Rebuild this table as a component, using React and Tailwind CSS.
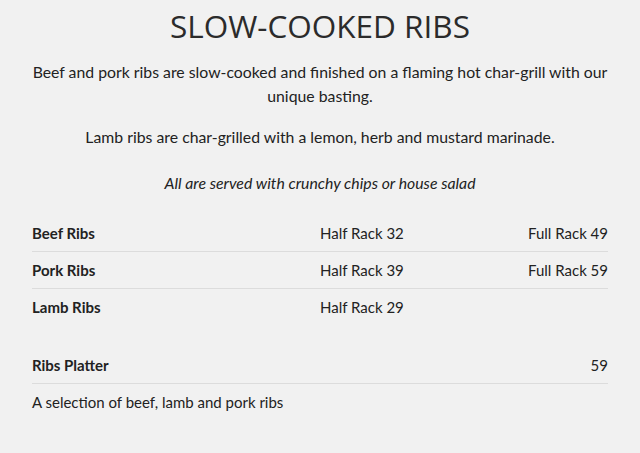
import React from 'react';

const ribs = [
  { name: 'Beef Ribs', half: 'Half Rack 32', full: 'Full Rack 49' },
  { name: 'Pork Ribs', half: 'Half Rack 39', full: 'Full Rack 59' },
  { name: 'Lamb Ribs', half: 'Half Rack 29', full: '' },
];

export default function App() {
  return (
    <div className="min-h-screen bg-[#f1f1f1] px-[32px] text-[#222] font-['Lato','Open_Sans',sans-serif] overflow-hidden">
      <h1 className="pt-[6px] text-center text-[31.5px] leading-[40px] font-normal text-[#2b2b2b] font-['Open_Sans','Lato',sans-serif]">
        SLOW-COOKED RIBS
      </h1>

      {/* intro */}
      <div className="-mx-[4px] mt-[14px] text-center text-[15.8px] leading-[24px]">
        <p>Beef and pork ribs are slow-cooked and finished on a flaming hot char-grill with our unique basting.</p>
        <p className="mt-[17px]">Lamb ribs are char-grilled with a lemon, herb and mustard marinade.</p>
        <p className="mt-[22px] italic">All are served with crunchy chips or house salad</p>
      </div>

      {/* rib racks */}
      <div className="mt-[20px] text-[15px] leading-[20px]">
        {ribs.map((r, i) => (
          <div
            key={r.name}
            className={`grid grid-cols-2 py-2 ${i < ribs.length - 1 ? 'border-b border-[#dcdcdc]' : 'border-b border-transparent'}`}
          >
            <span className="font-bold">{r.name}</span>
            <div className="flex justify-between">
              <span>{r.half}</span>
              <span>{r.full}</span>
            </div>
          </div>
        ))}
      </div>

      <div className="mt-[21px] text-[15px] leading-[20px]">
        <div className="flex justify-between py-2 border-b border-[#dcdcdc]">
          <span className="font-bold">Ribs Platter</span>
          <span>59</span>
        </div>
        <div className="py-2">A selection of beef, lamb and pork ribs</div>
      </div>
    </div>
  );
}
